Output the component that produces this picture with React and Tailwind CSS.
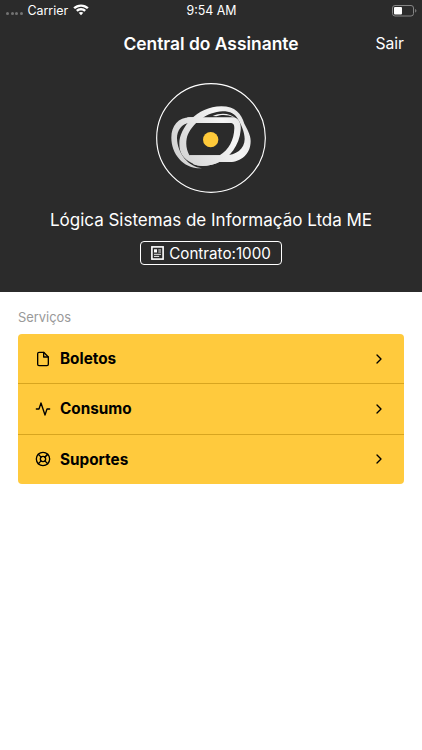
import { FiActivity, FiChevronRight, FiFile, FiLifeBuoy } from 'react-icons/fi';

const services = [
  { label: 'Boletos', icon: FiFile },
  { label: 'Consumo', icon: FiActivity },
  { label: 'Suportes', icon: FiLifeBuoy },
];

function WifiIcon() {
  return (
    <svg width="16" height="12" viewBox="0 0 16 12" fill="white">
      <path d="M8 0.4C5 0.4 2.3 1.5 0.3 3.4L2 5.1C3.6 3.6 5.7 2.7 8 2.7s4.4.9 6 2.4l1.7-1.7C13.7 1.5 11 .4 8 .4Z" />
      <path d="M8 4.100c-1.900 0-3.700.8-5 2l1.700 1.700C5.600 7 6.700 6.500 8 6.500s2.400.5 3.300 1.300L13 6.100c-1.300-1.200-3.100-2-5-2Z" />
      <path d="M8 7.900c-.9 0-1.700.3-2.300.9L8 11.200l2.300-2.400C9.700 8.200 8.900 7.900 8 7.900Z" />
    </svg>
  );
}

function BatteryIcon() {
  return (
    <svg width="25" height="12" viewBox="0 0 25 12" fill="none">
      <rect x="0.5" y="0.5" width="21" height="10.500" rx="2.500" stroke="#858585" />
      <rect x="2" y="2" width="8" height="7.500" rx="1" fill="white" />
      <path d="M23.200 4v3.600c.7-.3 1.200-1 1.200-1.800s-.5-1.500-1.200-1.800Z" fill="#858585" />
    </svg>
  );
}

function ContractIcon() {
  return (
    <svg width="13" height="14" viewBox="0 0 13 14" fill="none" stroke="white">
      <rect x="0.9" y="0.9" width="11.200" height="12.200" strokeWidth="1.600" />
      <path d="M3 3.300h3v3.200H3z" fill="white" stroke="none" />
      <path d="M7.300 4h2.700M7.300 6h2.700M3 8.300h7M3 10.400h5.200" strokeWidth="0.9" />
    </svg>
  );
}

function Logo() {
  return (
    <svg width="110" height="110" viewBox="18 14 330 330" fill="none">
      <defs>
        <linearGradient id="ribbon" x1="65" y1="240" x2="300" y2="110" gradientUnits="userSpaceOnUse">
          <stop offset="0" stopColor="#d0d0d0" />
          <stop offset="0.35" stopColor="#e2e2e2" />
          <stop offset="0.7" stopColor="#f5f5f5" />
          <stop offset="1" stopColor="#dedede" />
        </linearGradient>
      </defs>
      <circle cx="183" cy="179" r="163" stroke="white" strokeWidth="3.500" />
      {/* outer band on the left, tapering into the tail */}
      <path
        d="M137 117H120C85 117 64 143 64 178C64 225 98 272 156 270C115 266 82 225 81 180C81 155 95 137 118 133L137 132Z"
        fill="url(#ribbon)"
      />
      {/* top bar with the inner right side */}
      <path
        d="M112 117H250C268 119 274 138 272 156C268 200 240 240 200 255C180 263 150 266 130 258L118 231H209C236 215 252 185 253 150C253 138 250 134 240 134H112Z"
        fill="url(#ribbon)"
      />
      {/* tilted loop closing on the bottom bar */}
      <path
        d="M88 196C88 150 140 84 214 84C256 84 274 106 283 136C290 150 302 168 302 188C302 228 272 251 240 251H207C185 263 150 268 125 254C100 240 88 225 88 196ZM118 231H224C258 231 284 212 284 182C284 160 272 137 266 126C256 106 240 99 218 99C170 101 130 134 114 168C107 184 106 208 118 231Z"
        fill="url(#ribbon)"
        fillRule="evenodd"
      />
      <path d="M188 113C214 102 241 105 258 121L249 116C237 110 216 107 199 114Z" fill="#f2f2f2" />
      <circle cx="182" cy="184" r="23" fill="#ffca3a" />
    </svg>
  );
}

function ServiceRow({ label, icon: Icon }) {
  return (
    <button className="flex h-[50.300px] w-full items-center border-b border-[#d8a51f] px-[17px] last:h-[49.400px] last:border-b-0">
      <Icon size={16} />
      <span className="ml-[9px] pt-[2px] text-[15.300px] font-bold">{label}</span>
      <FiChevronRight size={16} className="ml-auto" />
    </button>
  );
}

export default function App() {
  return (
    <div className="h-[750px] w-[422px] overflow-hidden bg-white font-['Inter','Liberation_Sans',sans-serif] text-black">
      <header className="flex h-[292px] flex-col items-center bg-[#2b2b2b] text-white">
        <div className="grid h-[21px] w-full grid-cols-3 items-center pr-[5px] pl-[6px] text-[12.400px]">
          <div className="flex items-center">
            <div className="mt-[7px] mr-[5px] flex gap-[1.500px]">
              {[0, 1, 2, 3].map((dot) => (
                <span key={dot} className="h-[3px] w-[3px] rounded-full bg-[#737373]" />
              ))}
            </div>
            <span className="mt-px mr-[5px]">Carrier</span>
            <WifiIcon />
          </div>
          <span className="pt-[2px] text-center">9:54 AM</span>
          <div className="flex justify-end">
            <BatteryIcon />
          </div>
        </div>

        <div className="grid h-[44px] w-full grid-cols-[1fr_auto_1fr] items-center px-[18px] pt-[2px]">
          <h1 className="col-start-2 text-[17.400px] font-semibold">Central do Assinante</h1>
          <button className="justify-self-end text-[15.700px]">Sair</button>
        </div>

        <div className="mt-[18px]">
          <Logo />
        </div>
        <p className="mt-[15px] text-[17px] leading-6">Lógica Sistemas de Informação Ltda ME</p>
        <div className="mt-[9px] flex h-[24px] w-[142px] items-center justify-center gap-[5px] rounded-[4px] border border-white text-[15.200px]">
          <ContractIcon />
          <span className="pt-[2px]">Contrato:1000</span>
        </div>
      </header>

      <main className="px-[18px] pt-[16px]">
        <h2 className="text-[12.900px] leading-[20px] text-[#999999]">Serviços</h2>
        <div className="mt-[6px] overflow-hidden rounded-[4px] bg-[#ffca3d]">
          {services.map((service) => (
            <ServiceRow key={service.label} {...service} />
          ))}
        </div>
      </main>
    </div>
  );
}
